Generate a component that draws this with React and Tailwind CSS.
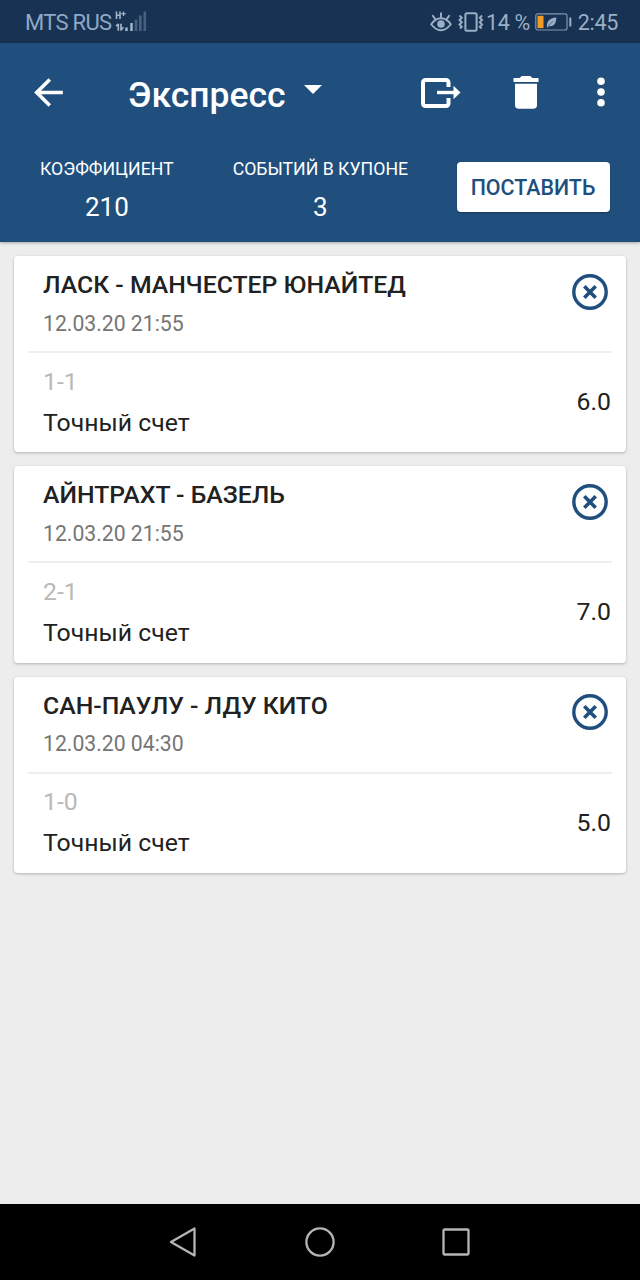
import React, { useState } from "react";

const initialEvents = [
  { id: 1, name: "ЛАСК - МАНЧЕСТЕР ЮНАЙТЕД", date: "12.03.20 21:55", score: "1-1", market: "Точный счет", odds: "6.0" },
  { id: 2, name: "АЙНТРАХТ - БАЗЕЛЬ", date: "12.03.20 21:55", score: "2-1", market: "Точный счет", odds: "7.0" },
  { id: 3, name: "САН-ПАУЛУ - ЛДУ КИТО", date: "12.03.20 04:30", score: "1-0", market: "Точный счет", odds: "5.0" },
];

const SignalIcon = () => (
  <svg className="ml-[4px] mt-[-4px]" width="34" height="22" viewBox="0 0 34 22" fill="none">
    <path d="M1.500 1.500v7.500M5 1.500v7.500M1.500 5.200h3.500" stroke="#a3b5c9" strokeWidth="1.600" />
    <path d="M8.500 1.500v4.500M6.300 3.700h4.400" stroke="#a3b5c9" strokeWidth="1.300" />
    <path d="M3.300 13.800v7M1 16.200l2.300-2.200M6 13.800v7M6 20l2.500-2.800" stroke="#a3b5c9" strokeWidth="1.700" />
    <path d="M11.500 17.500v3.500M16.500 13v8" stroke="#a3b5c9" strokeWidth="2.500" />
    <path d="M21 9.500v11.500M25.300 5.500v15.500M29.800 1.500v19.500" stroke="#46607d" strokeWidth="2.700" />
  </svg>
);

const EyeIcon = () => (
  <svg className="mt-[-2px]" width="22" height="20" viewBox="0 0 22 20" fill="none" stroke="#9bafc6" strokeWidth="1.9" strokeLinecap="round">
    <path d="M1.200 12.300C4 8 7.300 6.200 11 6.200s7 1.800 9.800 6.100c-3 4-6.100 5.900-9.800 5.900S4.200 16.300 1.200 12.300z" />
    <path d="M11 1.200v4M2.800 3.700l2.300 3.200M19.200 3.700l-2.300 3.200" />
    <circle cx="11" cy="12" r="3.800" fill="#9bafc6" stroke="none" />
  </svg>
);

const VibrationIcon = () => (
  <svg className="ml-[6px] mt-[-2px]" width="26" height="20" viewBox="0 0 26 20" fill="none" stroke="#9bafc6">
    <rect x="7.400" y="1.200" width="11.200" height="17.600" rx="1.500" strokeWidth="2" />
    <path d="M1.500 3.500l2.300 2.200L1.500 8l2.300 2.200L1.500 12.500l2.300 2.200L2 16.500M24.100 3.500l-2.300 2.200L24.100 8l-2.300 2.200 2.300 2.300-2.300 2.200 1.800 1.800" strokeWidth="1.900" />
  </svg>
);

const BatteryIcon = () => (
  <svg className="ml-[5px] mt-[-2px]" width="37" height="18" viewBox="0 0 37 18" fill="none">
    <rect x=".8" y=".8" width="31.200" height="16.200" rx="2" stroke="#8097b0" strokeWidth="1.200" />
    <rect x="2.500" y="2.800" width="6" height="12.300" fill="#f59a23" />
    <path d="M12 14.500c-.8-5.200 2-9.500 9.300-10 .2 5.500-2.800 9.800-7.300 8.400l-1.200 1.600z" fill="#9bafc6" />
    <path d="M13 13.200l5-5" stroke="#173252" strokeWidth=".6" />
    <path d="M35.300 4.500v9" stroke="#9bafc6" strokeWidth="2" />
  </svg>
);

const StatusBar = () => (
  <div className="h-[43px] bg-[#173252] flex items-center pt-[2px] pl-[25px] pr-[21px] text-[22px] leading-none text-[#8fa9c6]">
    <span className="tracking-[-0.7px] whitespace-nowrap">MTS RUS</span>
    <SignalIcon />
    <div className="ml-auto flex items-center text-[#9bafc6] whitespace-nowrap">
      <EyeIcon />
      <VibrationIcon />
      <span className="ml-[2px] text-[21.5px] tracking-[-0.4px]">14 %</span>
      <BatteryIcon />
      <span className="ml-[6px] mr-px text-[21.5px] tracking-[-0.3px]">2:45</span>
    </div>
  </div>
);

const Toolbar = () => (
  <div className="h-[99px] flex items-center">
    <button className="ml-[27px] mt-[-1px]">
      <svg width="43" height="43" viewBox="0 0 24 24" fill="#fff">
        <path d="M20 11H7.830l5.590-5.590L12 4l-8 8 8 8 1.410-1.410L7.830 13H20v-2z" />
      </svg>
    </button>
    <button className="ml-[58px] mt-[4px] flex items-center">
      <span className="text-[35.500px] leading-[44px] font-medium">Экспресс</span>
      <svg className="ml-[18px] mt-[-10px]" width="18" height="9" viewBox="0 0 18 9" fill="#fff">
        <path d="M0 0h18L9 9z" />
      </svg>
    </button>
    <div className="ml-auto flex items-center pr-[34px]">
      <svg width="40" height="30" viewBox="0 0 40 30" fill="none">
        <path d="M27.500 9V4.500a2.500 2.500 0 0 0-2.500-2.500H4.500A2.500 2.500 0 0 0 2 4.500v21A2.500 2.500 0 0 0 4.500 28H25a2.500 2.500 0 0 0 2.500-2.500V20" stroke="#fff" strokeWidth="4" />
        <path d="M16 14.500h18" stroke="#fff" strokeWidth="3.400" />
        <path d="M32.500 7.700l7 6.800-7 6.800z" fill="#fff" />
      </svg>
      <svg className="ml-[52px]" width="26" height="33" viewBox="0 0 26 33" fill="#fff">
        <path d="M.5 2h6.200l2-2h8.600l2 2h6.200v4H.5zM2 7.800h22v21.200a3.800 3.800 0 0 1-3.800 3.800H5.800A3.800 3.800 0 0 1 2 29z" />
      </svg>
      <svg className="ml-[57px] mt-[-1px]" width="10" height="30" viewBox="0 0 10 30" fill="#fff">
        <circle cx="5" cy="4.200" r="3.800" />
        <circle cx="5" cy="15" r="3.800" />
        <circle cx="5" cy="25.800" r="3.800" />
      </svg>
    </div>
  </div>
);

const Stat = ({ label, value }) => (
  <div className="flex flex-col items-center whitespace-nowrap">
    <span className="text-[17.7px] leading-[22px]">{label}</span>
    <span className="mt-[12px] text-[26px] leading-[30px]">{value}</span>
  </div>
);

const EventCard = ({ event, onRemove }) => (
  <div className="h-[196.3px] bg-white rounded-[4px] shadow-[0_1px_3px_rgba(0,0,0,0.25)] px-[14px]">
    <div className="h-[95px] flex justify-between border-b-2 border-[#eeeeee] box-content pl-[15px] pr-[4px] w-[565px]">
      <div className="pt-[14px] whitespace-nowrap">
        <h2 className="text-[24.8px] leading-[30px] font-medium text-[#212121]">{event.name}</h2>
        <p className="mt-[8.5px] text-[21.2px] leading-[30px] text-[#757575]">{event.date}</p>
      </div>
      <button className="mt-[17.5px] h-[36px] w-[36px] shrink-0" onClick={() => onRemove(event.id)}>
        <svg width="36" height="36" viewBox="0 0 36 36" fill="none" stroke="#204f7e">
          <circle cx="18" cy="18" r="16.200" strokeWidth="3.400" />
          <path d="M12.300 12.300l11.400 11.400M23.700 12.300L12.300 23.700" strokeWidth="3.600" />
        </svg>
      </button>
    </div>
    <div className="h-[98px] flex items-center justify-between pl-[15px] pr-px text-[24.8px] leading-[30px] text-[#212121]">
      <div>
        <p className="text-[#b9b9b9]">{event.score}</p>
        <p className="mt-[11px]">{event.market}</p>
      </div>
      <span>{event.odds}</span>
    </div>
  </div>
);

const NavBar = () => (
  <div className="h-[76px] bg-black flex items-center justify-between pl-[169px] pr-[170px]">
    <svg width="28" height="30" viewBox="0 0 28 30" fill="none" stroke="#b5b5b5" strokeWidth="2.3" strokeLinejoin="round">
      <path d="M25.500 1.500v27L2 15z" />
    </svg>
    <svg className="ml-[1px]" width="30" height="30" viewBox="0 0 30 30" fill="none" stroke="#b5b5b5" strokeWidth="2.3">
      <circle cx="15" cy="15" r="13.600" />
    </svg>
    <svg width="28" height="28" viewBox="0 0 28 28" fill="none" stroke="#b5b5b5" strokeWidth="2.3">
      <rect x="1.500" y="1.500" width="25" height="25" rx="1" />
    </svg>
  </div>
);

const App = () => {
  const [events, setEvents] = useState(initialEvents);

  const handleRemove = (id) => {
    setEvents(events.filter((event) => event.id !== id));
  };

  return (
    <div className="w-[640px] h-[1280px] flex flex-col overflow-hidden bg-[#ededed] font-['Roboto',sans-serif]">
      <StatusBar />
      <header className="h-[199px] bg-[#204f7e] text-white shadow-[0_1px_3px_rgba(0,0,0,0.3)]">
        <Toolbar />
        <div className="flex pt-[16px] pl-[40px] pr-[30px]">
          <Stat label="КОЭФФИЦИЕНТ" value="210" />
          <div className="ml-[59px]">
            <Stat label="СОБЫТИЙ В КУПОНЕ" value={events.length} />
          </div>
          <button className="ml-auto mt-[4px] h-[50px] w-[153px] rounded-[4px] bg-white pt-[2px] pr-px text-[21.4px] leading-[30px] font-medium whitespace-nowrap text-[#204f7e] shadow-[0_1px_2px_rgba(0,0,0,0.3)]">
            ПОСТАВИТЬ
          </button>
        </div>
      </header>
      <main className="flex-1 flex flex-col gap-[14px] px-[14px] pt-[14px]">
        {events.map((event) => (
          <EventCard key={event.id} event={event} onRemove={handleRemove} />
        ))}
      </main>
      <NavBar />
    </div>
  );
};

export default App;
